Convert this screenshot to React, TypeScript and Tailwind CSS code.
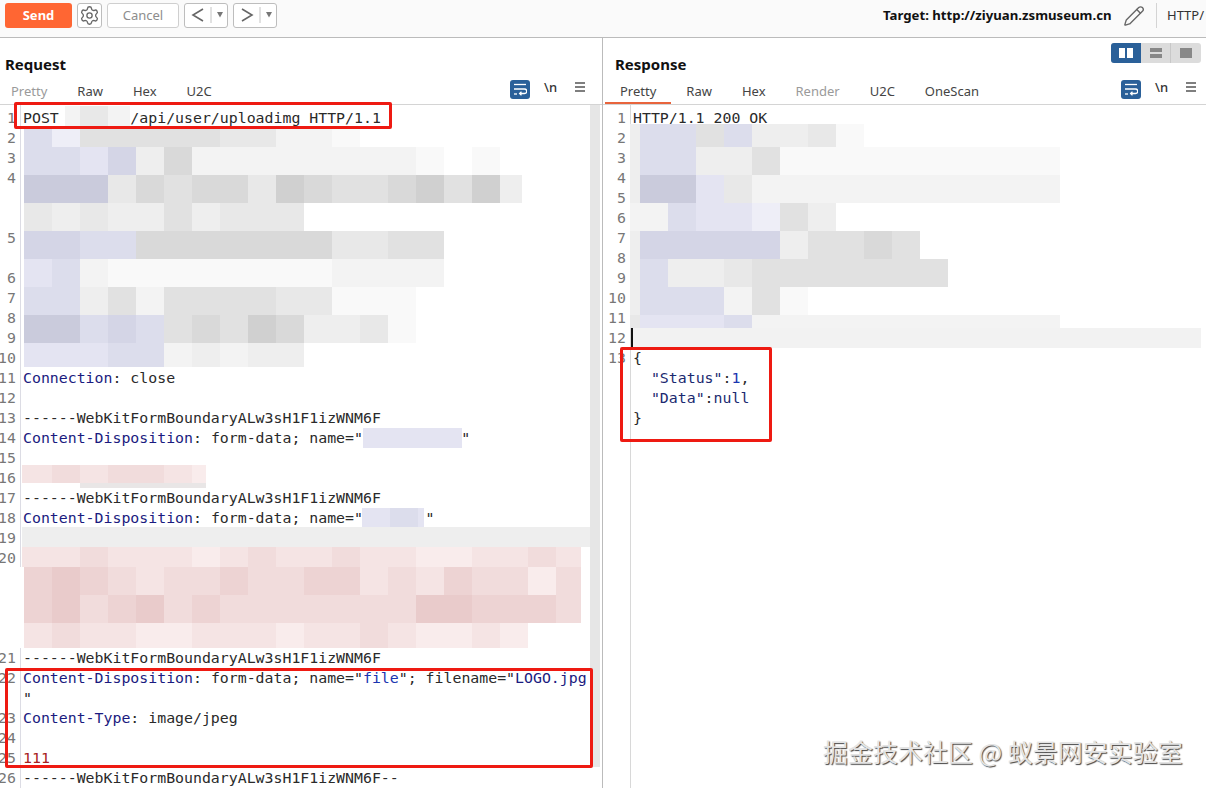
import { FC, ReactNode } from "react";
import { Pencil, Settings } from "lucide-react";

const KEY = "text-[#1b1b80]";
const VAL = "text-[#1a35b0]";

// palette for the blurred (mosaic) parts of the screenshot
const SWATCH: Record<string, string> = {
  ".": "bg-transparent",
  "a": "bg-[#cacbdc]",
  "b": "bg-[#d4d5e6]",
  "c": "bg-[#dcddec]",
  "d": "bg-[#e4e4f2]",
  "e": "bg-[#eeeef7]",
  "f": "bg-[#d0d0d0]",
  "g": "bg-[#d9d9d9]",
  "h": "bg-[#e1e1e1]",
  "i": "bg-[#e8e8e8]",
  "j": "bg-[#eeeeee]",
  "k": "bg-[#f3f3f3]",
  "l": "bg-[#f9f9f9]",
  "o": "bg-[#edd3d3]",
  "p": "bg-[#f1dcdc]",
  "q": "bg-[#f5e4e4]",
  "r": "bg-[#f9ecec]",
  "s": "bg-[#e9cbcb]",
};

type MosaicRow = { cells: string; h: string; first?: string; last?: string };

const Mosaic: FC<{ rows: MosaicRow[]; className: string }> = ({ rows, className }) => (
  <div className={`absolute flex flex-col ${className}`}>
    {rows.map((row, r) => (
      <div key={r} className={`flex ${row.h}`}>
        {row.cells.split("").map((c, i) => {
          let w = "w-7";
          if (i === 0 && row.first) w = row.first;
          if (i === row.cells.length - 1 && row.last) w = row.last;
          return <div key={i} className={`${w} ${SWATCH[c]}`} />;
        })}
      </div>
    ))}
  </div>
);

const Chevron: FC<{ d: string }> = ({ d }) => (
  <button className="flex h-[25px] w-11 items-center rounded-[3px] border border-[#bdbdbd] bg-white">
    <svg width="42" height="23" viewBox="0 0 42 23" className="text-[#666]">
      <path d={d} fill="none" stroke="currentColor" strokeWidth="1.6" />
      <path d="M26 3v16" stroke="#c4c4c4" />
      <path d="M32 8h6l-3 5.5z" fill="#777" />
    </svg>
  </button>
);

const WrapIcon: FC = () => (
  <div className="flex h-[19px] w-5 items-center justify-center rounded-[3px] bg-[#2a6099]">
    <svg width="14" height="13" viewBox="0 0 14 13" fill="none" stroke="white" strokeWidth="1.3">
      <path d="M1 1.5h12" />
      <path d="M1 6h10.5a1.8 1.8 0 0 1 0 4.5H7" />
      <path d="M8.5 8.7 6.6 10.5l1.9 1.8" />
      <path d="M1 11h3" />
    </svg>
  </div>
);

const EditorTools: FC = () => (
  <div className="flex items-center">
    <WrapIcon />
    <span className="ml-[14px] mb-1 w-3 text-[13px] font-medium text-[#333]">\n</span>
    <svg width="10" height="10" viewBox="0 0 10 10" className="ml-[19px] mb-1" stroke="#555" strokeWidth="1.6">
      <path d="M0 1h10M0 5h10M0 9h10" />
    </svg>
  </div>
);

const Tabs: FC<{ items: string[]; muted?: string[]; active?: string; className?: string }> = ({
  items,
  muted = [],
  active,
  className = "",
}) => (
  <div className={`flex h-[23px] items-start ${className}`}>
    {items.map((t) => (
      <div
        key={t}
        className={`h-[23px] px-[15px] pt-px text-[13px] leading-[18px] ${
          muted.includes(t) ? "text-[#9a9a9a]" : "text-[#444]"
        } ${t === active ? "border-b-2 border-[#e8643c]" : ""}`}
      >
        {t}
      </div>
    ))}
  </div>
);

const Gutter: FC<{ lines: [string, number][]; className: string }> = ({ lines, className }) => (
  <div className={`shrink-0 border-r pt-[3px] text-[#777] ${className}`}>
    {lines.map(([n, span]) => (
      <div key={n} className={`flex justify-end pr-[4px] ${span === 2 ? "h-10" : span === 5 ? "h-[100px]" : span === 3 ? "h-[60px]" : "h-5"}`}>
        {n}
      </div>
    ))}
  </div>
);

const Line: FC<{ children?: ReactNode; className?: string }> = ({ children, className = "" }) => (
  <div className={`h-5 whitespace-pre ${className}`}>{children}</div>
);

const BOUNDARY = "------WebKitFormBoundaryALw3sH1F1izWNM6F";

const requestNums: [string, number][] = [
  ["1", 1], ["2", 1], ["3", 1], ["4", 3], ["5", 2], ["6", 1], ["7", 1], ["8", 1], ["9", 1], ["10", 1],
  ["11", 1], ["12", 1], ["13", 1], ["14", 1], ["15", 1], ["16", 1], ["17", 1], ["18", 1], ["19", 1],
  ["20", 5], ["21", 1], ["22", 2], ["23", 1], ["24", 1], ["25", 1], ["26", 1],
];

const responseNums: [string, number][] = Array.from({ length: 13 }, (_, i) => [String(i + 1), 1]);

const requestMosaic: MosaicRow[] = [
  { h: "h-[19px]", cells: "cehhhhhiikkl" },
  { h: "h-7", cells: "ccdbjgkkkkkkkkl.l" },
  { h: "h-7", cells: "aaaighggifghhgfhfj", last: "w-[22px]" },
  { h: "h-7", cells: "ijijjhjiii" },
  { h: "h-7", cells: "bbccgggggggiihh" },
  { h: "h-7", cells: "dckllllllllkkkk" },
  { h: "h-7", cells: "ccjhkhhhhiilll" },
  { h: "h-7", cells: "aacbchghfgjjil" },
  { h: "h-6", cells: "dddcckjkjj" },
];

const pinkMosaic: MosaicRow[] = [
  { h: "h-7", cells: "osopqppoppooqpqopprp", last: "w-[25px]" },
  { h: "h-7", cells: "ospospopppppppssooop", last: "w-[25px]" },
  { h: "h-[25px]", cells: "qpqqrrqqqrqqpqrrqr" },
];

const responseMosaic: MosaicRow[] = [
  { h: "h-[23px]", first: "w-[10px]", cells: "jcchcjjil" },
  { h: "h-7", first: "w-[10px]", cells: "jccjjhllllllllll" },
  { h: "h-7", first: "w-[10px]", cells: "jaadikkkkkkkkkkk" },
  { h: "h-7", first: "w-[10px]", cells: "kkcddehj" },
  { h: "h-7", first: "w-[10px]", cells: "jbbbbbjhhgh" },
  { h: "h-7", first: "w-[10px]", cells: "jcjjihhhhhhh" },
  { h: "h-7", first: "w-[10px]", cells: "jccckhl" },
  { h: "h-[13px]", first: "w-[10px]", cells: "idddckkkkkkkkkkk" },
];

const App: FC = () => {
  return (
    <div className="relative flex h-screen w-screen flex-col overflow-hidden bg-white font-['Noto_Sans','Open_Sans',sans-serif]">
      {/* toolbar */}
      <div className="flex h-[38px] shrink-0 items-start border-b border-[#bbbbbb] bg-[#fafafa] pt-[3px] pl-[5px]">
        <button className="h-[25px] w-[67px] rounded-[3px] bg-[#ff6633] text-[13px] font-bold text-white">Send</button>
        <button className="ml-[5px] flex h-[25px] w-[25px] items-center justify-center rounded-[3px] border border-[#bdbdbd] bg-white">
          <Settings size={21} strokeWidth={1.5} className="text-[#666]" />
        </button>
        <button className="ml-[5px] h-[25px] w-[72px] rounded-[3px] border border-[#cfcfcf] bg-white text-[13px] text-[#8d8d8d]">Cancel</button>
        <div className="ml-[5px] flex gap-[5px]">
          <Chevron d="M18 5 8 11 18 17" />
          <Chevron d="M8 5 18 11 8 17" />
        </div>
        <div className="ml-auto flex h-[25px] w-[323px] shrink-0 items-center">
          <span className="w-[229px] shrink-0 whitespace-nowrap text-[13.2px] font-bold text-[#111]">Target: http://ziyuan.zsmuseum.cn</span>
          <Pencil size={22} strokeWidth={1.5} className="ml-[11px] shrink-0 text-[#666]" />
          <div className="ml-[11px] h-[25px] w-px shrink-0 bg-[#d4d4d4]" />
          <span className="ml-[10px] text-[13px] text-[#333]">HTTP/</span>
        </div>
      </div>

      <div className="flex min-h-0 flex-1 font-['DejaVu_Sans_Mono',monospace] text-[14.87px] leading-5 text-[#2a2a2a]">
        {/* request */}
        <section className="flex w-[603px] shrink-0 flex-col border-r border-[#bbbbbb]">
          <header className="h-[67px] shrink-0 border-b border-[#d4d4d4] font-['Noto_Sans','Open_Sans',sans-serif]">
            <h2 className="pt-[16px] pl-[5px] text-[15px] leading-5 font-bold text-[#111]">Request</h2>
            <div className="mt-[7px] flex items-start justify-between pr-[17px]">
              <Tabs items={["Pretty", "Raw", "Hex", "U2C"]} muted={["Pretty"]} className="-ml-1" />
              <div className="-mt-[4px]"><EditorTools /></div>
            </div>
          </header>
          <div className="relative flex min-h-0 flex-1">
            <Gutter lines={requestNums} className="w-[21px] border-[#dcdce4]" />
            <div className="flex-1 pt-[3px] pl-[2px]">
              <Line>{"POST        /api/user/uploadimg HTTP/1.1"}</Line>
              <Line /><Line /><Line /><Line /><Line /><Line /><Line /><Line /><Line /><Line /><Line /><Line />
              <Line><span className={KEY}>Connection</span>: close</Line>
              <Line />
              <Line>{BOUNDARY}</Line>
              <Line><span className={KEY}>Content-Disposition</span>{': form-data; name="           "'}</Line>
              <Line />
              <Line />
              <Line>{BOUNDARY}</Line>
              <Line><span className={KEY}>Content-Disposition</span>{': form-data; name="       "'}</Line>
              <Line /><Line /><Line /><Line /><Line /><Line />
              <Line>{BOUNDARY}</Line>
              <Line>
                <span className={KEY}>Content-Disposition</span>: form-data; name="<span className={VAL}>file</span>"; filename="<span className={KEY}>LOGO.jpg</span>
              </Line>
              <Line>"</Line>
              <Line><span className={KEY}>Content-Type</span>: image/jpeg</Line>
              <Line />
              <Line className="text-[#a82020]">111</Line>
              <Line>{BOUNDARY}--</Line>
            </div>
            <div className="mr-[2px] h-[662px] w-[10px] shrink-0 bg-[#e6e6e6]" />

            {/* blurred parts */}
            <Mosaic className="top-[1px] left-[65px]" rows={[{ h: "h-[21px]", first: "w-[15px]", cells: "kik", last: "w-[22px]" }]} />
            <Mosaic className="top-[23px] left-6" rows={requestMosaic} />
            <Mosaic className="top-[323px] left-[363px]" rows={[{ h: "h-5", cells: "dddd", last: "w-[15px]" }]} />
            <Mosaic className="top-[403px] left-[362px]" rows={[{ h: "h-5", cells: "dcd", last: "w-[6px]" }]} />
            <Mosaic className="top-[360px] left-[22px]" rows={[{ h: "h-[18px]", first: "w-[30px]", cells: "qpqppqr", last: "w-[14px]" }]} />
            <div className="absolute top-[378px] left-[80px] h-[5px] w-[126px] bg-[#e9e6e6]" />
            <div className="absolute top-[422px] left-[22px] h-5 w-[568px] bg-[#eeeeee]" />
            <div className="absolute top-[462px] left-[20px] h-[81px] w-[4px] bg-white" />
            <Mosaic className="top-[442px] left-[22px]" rows={[{ h: "h-5", first: "w-[30px]", cells: "qqpqqqrqpqqpqqrrqqpq", last: "w-[25px]" }]} />
            <Mosaic className="top-[462px] left-6" rows={pinkMosaic} />

            {/* red marks */}
            <div className="absolute top-[-3px] left-[14px] h-[27px] w-[378px] rounded-[2px] border-[3px] border-[#ee1a12]" />
            <div className="absolute top-[563px] left-[5px] h-[100px] w-[588px] rounded-[2px] border-[3px] border-[#ee1a12]" />
          </div>
        </section>

        {/* response */}
        <section className="flex min-w-0 flex-1 flex-col">
          <header className="h-[67px] shrink-0 border-b border-[#d4d4d4] font-['Noto_Sans','Open_Sans',sans-serif]">
            <div className="flex items-start justify-between pt-[5px] pr-[5px] pl-[12px]">
              <h2 className="pt-[11px] text-[15px] leading-5 font-bold text-[#111]">Response</h2>
              <div className="flex h-5 w-[90px] overflow-hidden rounded-[3px] bg-[#dcdcdc]">
                <div className="flex w-[30px] items-center justify-center gap-[2px] bg-[#2a6099]">
                  <div className="h-[10px] w-[6px] bg-white" /><div className="h-[10px] w-[6px] bg-white" />
                </div>
                <div className="flex w-[30px] flex-col items-center justify-center gap-[2px] border-r border-[#c8c8c8]">
                  <div className="h-1 w-3 bg-[#888]" /><div className="h-1 w-3 bg-[#888]" />
                </div>
                <div className="flex w-[30px] items-center justify-center">
                  <div className="h-[10px] w-3 bg-[#888]" />
                </div>
              </div>
            </div>
            <div className="mt-[7px] flex items-start justify-between pr-[10px] pl-[2px]">
              <Tabs items={["Pretty", "Raw", "Hex", "Render", "U2C", "OneScan"]} muted={["Render"]} active="Pretty" />
              <div className="-mt-[4px]"><EditorTools /></div>
            </div>
          </header>
          <div className="relative flex min-h-0 flex-1">
            <Gutter lines={responseNums} className="w-[28px] border-[#d8d8d8]" />
            <div className="flex-1 pt-[3px]">
              <Line className="pl-[2px]">HTTP/1.1 200 OK</Line>
              <Line /><Line /><Line /><Line /><Line /><Line /><Line /><Line /><Line />
              <Line />
              <div className="mr-[5px] h-5 border-l-2 border-[#111] bg-[#f2f2f2]" />
              <Line className="pl-[2px]">{"{"}</Line>
              <Line className="pl-[2px]">{"  "}<span className="text-[#1b2a70]">"Status"</span>:<span className={VAL}>1</span>,</Line>
              <Line className="pl-[2px]">{"  "}<span className="text-[#1b2a70]">"Data"</span>:<span className="text-[#1b2a70]">null</span></Line>
              <Line className="pl-[2px]">{"}"}</Line>
            </div>

            <Mosaic className="top-[19px] left-[27px]" rows={responseMosaic} />

            <div className="absolute top-[242px] left-[17px] h-[95px] w-[152px] rounded-[2px] border-[3px] border-[#ee1a12]" />

            <div className="absolute top-[630px] left-[220px] whitespace-nowrap font-['Noto_Sans_CJK_SC',sans-serif] text-[25px] leading-8 text-[#e4e4e4] [text-shadow:1px_1px_1px_#444]">
              掘金技术社区 @ 蚁景网安实验室
            </div>
          </div>
        </section>
      </div>
    </div>
  );
};

export default App;
